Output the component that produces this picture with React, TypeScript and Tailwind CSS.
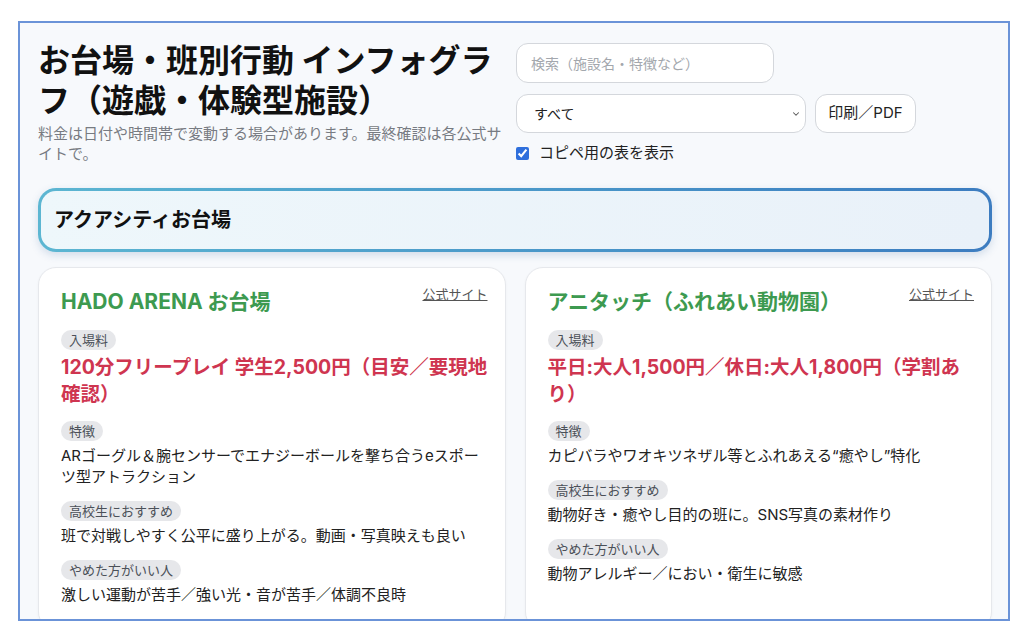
import { ChevronDown } from "lucide-react";

const spots = [
  {
    name: "HADO ARENA お台場",
    price: "120分フリープレイ 学生2,500円（目安／要現地確認）",
    feature: "ARゴーグル＆腕センサーでエナジーボールを撃ち合うeスポーツ型アトラクション",
    recommend: "班で対戦しやすく公平に盛り上がる。動画・写真映えも良い",
    avoid: "激しい運動が苦手／強い光・音が苦手／体調不良時",
  },
  {
    name: "アニタッチ（ふれあい動物園）",
    price: "平日:大人1,500円／休日:大人1,800円（学割あり）",
    feature: "カピバラやワオキツネザル等とふれあえる“癒やし”特化",
    recommend: "動物好き・癒やし目的の班に。SNS写真の素材作り",
    avoid: "動物アレルギー／におい・衛生に敏感",
  },
];

const Badge = ({ children }: { children: React.ReactNode }) => (
  <span className="block w-fit rounded-full bg-[#e6e7ea] px-2 text-[13px] leading-[20px] text-[#4b5058]">
    {children}
  </span>
);

const SpotCard = ({ spot }: { spot: (typeof spots)[number] }) => (
  <div className="rounded-[18px] border border-[#e6e8ec] bg-white pl-[22px] pr-[17px] pt-[20px] pb-6 shadow-[0_1px_3px_rgba(0,0,0,0.04)]">
    <div className="flex items-start justify-between gap-3">
      <h3 className="text-[21px] font-bold leading-[28px] text-[#3d9a50]">{spot.name}</h3>
      <a className="mt-[-2px] shrink-0 text-[13px] leading-[16px] text-[#555] underline">公式サイト</a>
    </div>

    <div className="mt-[14px]">
      <Badge>入場料</Badge>
      <p className="mt-1 text-[19.5px] font-bold leading-[27px] text-[#cf3550]">{spot.price}</p>
    </div>

    <div className="mt-[13px]">
      <Badge>特徴</Badge>
      <p className="mt-1 text-[15px] leading-[21px] text-[#222]">{spot.feature}</p>
    </div>

    <div className="mt-[14px]">
      <Badge>高校生におすすめ</Badge>
      <p className="mt-1 text-[15px] leading-[21px] text-[#222]">{spot.recommend}</p>
    </div>

    <div className="mt-[14px]">
      <Badge>やめた方がいい人</Badge>
      <p className="mt-1 text-[15px] leading-[21px] text-[#222]">{spot.avoid}</p>
    </div>
  </div>
);

export default function App() {
  return (
    <div
      className="h-[634px] w-[1024px] bg-white pl-[18px] pt-[21px]"
      style={{ fontFamily: 'Inter, "Noto Sans CJK JP", sans-serif' }}
    >
      <div className="h-[600px] w-[992px] overflow-hidden border-2 border-[#6b93d8] bg-[#f7f9fc] pl-[18px] pr-[16px] pt-[18px]">
        {/* header */}
        <div className="flex gap-2">
          <div className="w-[470px]">
            <h1 className="text-[32px] font-bold leading-[40px] text-[#111]">
              お台場・班別行動 インフォグラフ（遊戯・体験型施設）
            </h1>
            <p className="mt-[3px] text-[15px] leading-[20px] text-[#777b82]">
              料金は日付や時間帯で変動する場合があります。最終確認は各公式サイトで。
            </p>
          </div>

          <div className="mt-[2px] flex flex-col">
            <input
              className="h-[40px] w-[258px] rounded-xl border border-[#d4d7dc] bg-white px-[14px] text-[14px] outline-none placeholder:text-[#a3a7ad]"
              placeholder="検索（施設名・特徴など）"
            />
            <div className="mt-[11px] flex gap-[9px]">
              <div className="relative">
                <select className="h-[39px] w-[290px] appearance-none rounded-xl border border-[#d4d7dc] bg-white pl-[17px] text-[14px] text-[#222] outline-none">
                  <option>すべて</option>
                </select>
                <ChevronDown className="pointer-events-none absolute right-[5px] top-[15px] h-[10px] w-[10px] text-[#555]" strokeWidth={2.5} />
              </div>
              <button className="h-[39px] w-[101px] rounded-xl border border-[#d4d7dc] bg-white text-[15px] text-[#222]">
                印刷／PDF
              </button>
            </div>
            <label className="mt-[10px] flex items-center gap-[10px] text-[15px] leading-[20px] text-[#222]">
              <input type="checkbox" defaultChecked className="h-[13px] w-[13px] accent-[#2f6fdc]" />
              コピペ用の表を表示
            </label>
          </div>
        </div>

        {/* section */}
        <div className="mt-[24px] rounded-[18px] bg-gradient-to-r from-[#5cb6d2] to-[#3c7cc0] p-[3px] shadow-[0_3px_8px_rgba(40,90,150,0.18)]">
          <div className="flex h-[58px] items-center rounded-[15px] bg-gradient-to-r from-[#eef7fb] to-[#e9f1f9] pl-[13px]">
            <h2 className="text-[20px] font-bold text-[#111]">アクアシティお台場</h2>
          </div>
        </div>

        <div className="mt-[15px] grid grid-cols-2 gap-[19px]">
          {spots.map((s) => (
            <SpotCard key={s.name} spot={s} />
          ))}
        </div>
      </div>
    </div>
  );
}
